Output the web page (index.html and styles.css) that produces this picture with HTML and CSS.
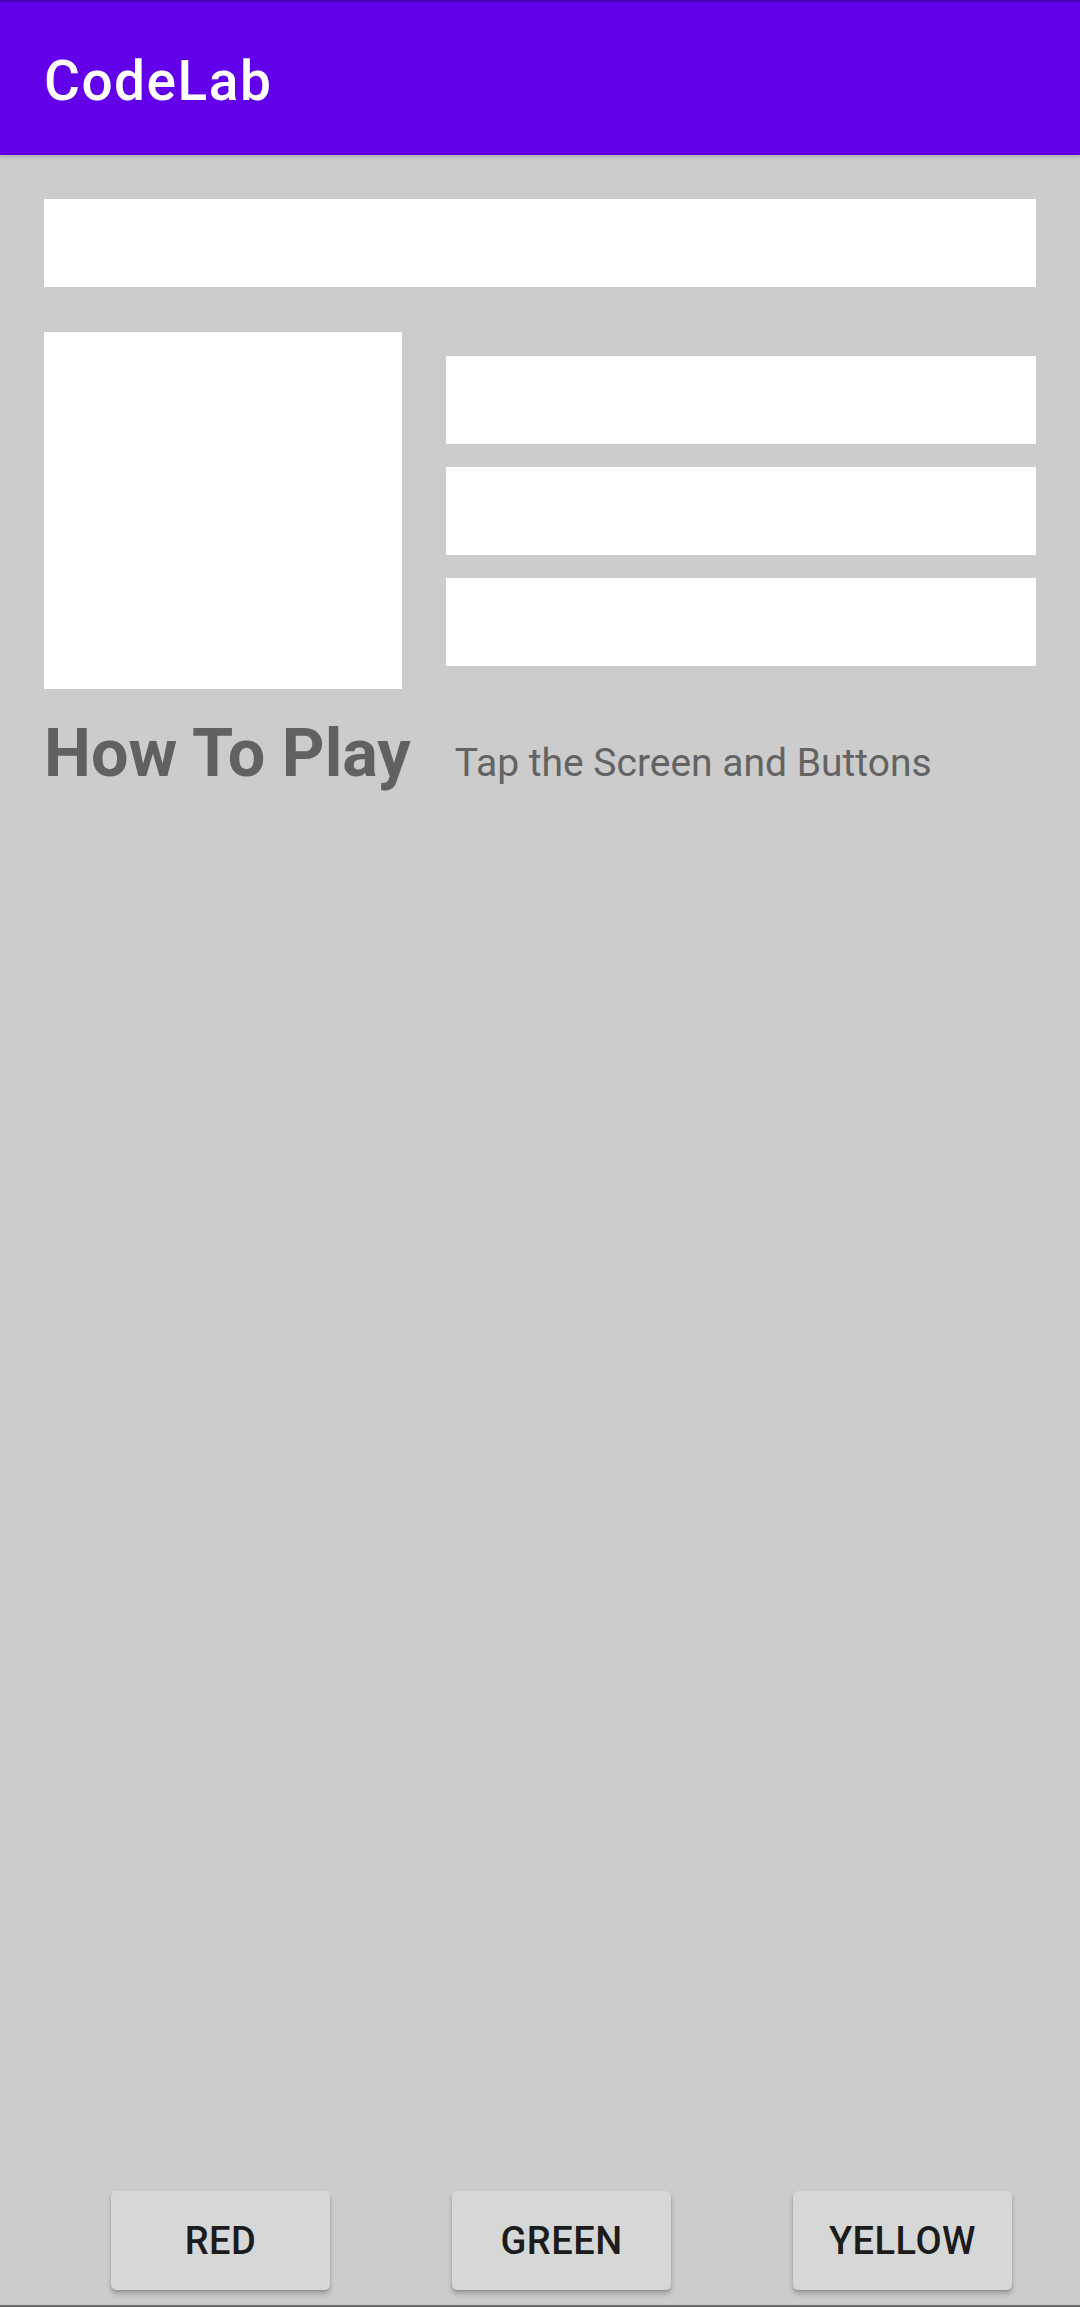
FILE: index.html
```html
<!DOCTYPE html>
<html lang="en">
<head>
<meta charset="utf-8">
<title>CodeLab</title>
<link rel="stylesheet" href="styles.css">
</head>
<body>
<div class="app">
  <header class="appbar">
    <h1 class="title">CodeLab</h1>
  </header>
  <main class="content">
    <div class="box wide"></div>
    <div class="row">
      <div class="square"></div>
      <div class="stack">
        <div class="box"></div>
        <div class="box"></div>
        <div class="box"></div>
      </div>
    </div>
    <div class="textrow">
      <h2 class="heading">How To Play</h2>
      <p class="hint">Tap the Screen and Buttons</p>
    </div>
  </main>
  <div class="buttons">
    <button class="btn">RED</button>
    <button class="btn">GREEN</button>
    <button class="btn">YELLOW</button>
  </div>
  <div class="navline"></div>
</div>
</body>
</html>
```

FILE: styles.css
```css
* { box-sizing: border-box; }
html, body {
  margin: 0;
  padding: 0;
  background: #cccccc;
  font-family: Roboto, "Liberation Sans", sans-serif;
}
.app {
  width: 1080px;
  height: 2307px;
  display: flex;
  flex-direction: column;
  background: #cccccc;
}
.appbar {
  height: 155px;
  background: #6200ea;
  border-top: 2px solid #4800b8;
  padding: 0 44px;
  box-shadow: 0 2px 3px rgba(0,0,0,0.15);
  position: relative;
  z-index: 1;
}
.title {
  margin: 47px 0 0;
  font-size: 55px;
  font-weight: 500;
  line-height: normal;
  color: #ffffff;
  letter-spacing: 1.5px;
}
.content {
  flex: 1;
  padding: 44px 44px 0;
}
.box {
  background: #ffffff;
  height: 88px;
}
.row {
  display: flex;
  margin-top: 45px;
}
.square {
  width: 358px;
  height: 357px;
  background: #ffffff;
}
.stack {
  flex: 1;
  margin-left: 44px;
  display: flex;
  flex-direction: column;
  justify-content: center;
  gap: 23px;
}
.textrow {
  display: flex;
  align-items: baseline;
  gap: 44px;
  margin-top: 25px;
}
.heading {
  margin: 0;
  font-size: 66.5px;
  font-weight: 700;
  line-height: normal;
  color: #616161;
}
.hint {
  margin: 0;
  font-size: 39px;
  font-weight: 400;
  color: #636363;
}
.buttons {
  display: flex;
  gap: 122px;
  padding-left: 111px;
  padding-bottom: 15px;
}
.btn {
  width: 219px;
  height: 99px;
  border: none;
  border-radius: 5px;
  background: #d6d7d7;
  color: #1c1c1c;
  font-family: Roboto, "Liberation Sans", sans-serif;
  font-size: 38px;
  font-weight: 500;
  letter-spacing: 0.5px;
  box-shadow: 0 4px 5px rgba(0,0,0,0.22), 0 1px 2px rgba(0,0,0,0.12);
  padding: 0;
}
.navline {
  height: 2px;
  background: #6a6a6a;
}
```
